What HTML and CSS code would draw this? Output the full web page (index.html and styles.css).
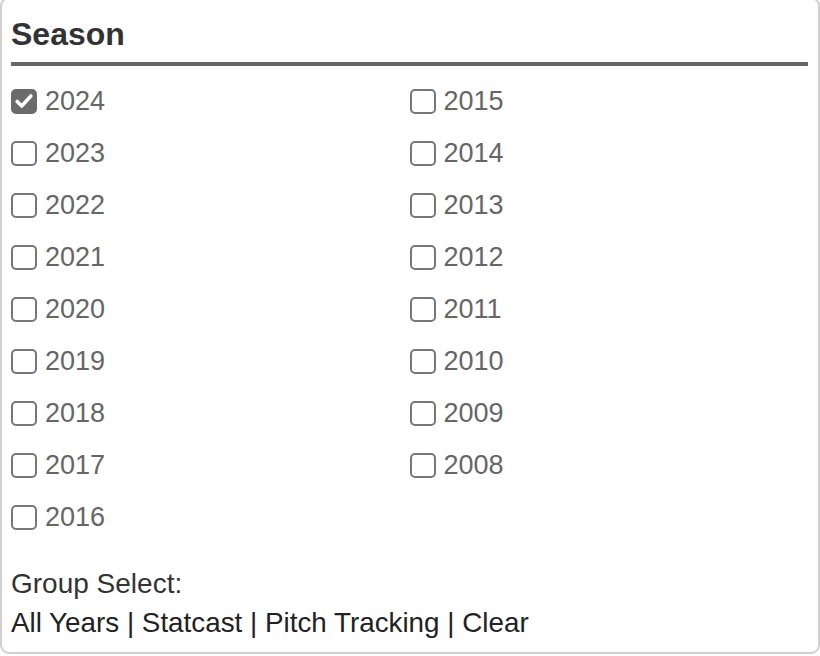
FILE: index.html
```html
<!DOCTYPE html>
<html>
<head>
<meta charset="utf-8">
<link rel="stylesheet" href="styles.css">
</head>
<body>
<div class="panel">
  <h2 class="title">Season</h2>
  <div class="years">
    <label class="opt"><span class="box checked"><svg viewBox="0 0 24 24" width="22" height="22"><path d="M4.5 12.5l5 5L19.5 6.5" fill="none" stroke="#fff" stroke-width="3.8" stroke-linecap="round" stroke-linejoin="round"/></svg></span><span class="yr">2024</span></label>
    <label class="opt"><span class="box"></span><span class="yr">2023</span></label>
    <label class="opt"><span class="box"></span><span class="yr">2022</span></label>
    <label class="opt"><span class="box"></span><span class="yr">2021</span></label>
    <label class="opt"><span class="box"></span><span class="yr">2020</span></label>
    <label class="opt"><span class="box"></span><span class="yr">2019</span></label>
    <label class="opt"><span class="box"></span><span class="yr">2018</span></label>
    <label class="opt"><span class="box"></span><span class="yr">2017</span></label>
    <label class="opt"><span class="box"></span><span class="yr">2016</span></label>
    <label class="opt"><span class="box"></span><span class="yr">2015</span></label>
    <label class="opt"><span class="box"></span><span class="yr">2014</span></label>
    <label class="opt"><span class="box"></span><span class="yr">2013</span></label>
    <label class="opt"><span class="box"></span><span class="yr">2012</span></label>
    <label class="opt"><span class="box"></span><span class="yr">2011</span></label>
    <label class="opt"><span class="box"></span><span class="yr">2010</span></label>
    <label class="opt"><span class="box"></span><span class="yr">2009</span></label>
    <label class="opt"><span class="box"></span><span class="yr">2008</span></label>
  </div>
  <div class="group-label">Group Select:</div>
  <div class="group-links"><a>All Years</a> | <a>Statcast</a> | <a>Pitch Tracking</a> | <a>Clear</a></div>
</div>
</body>
</html>
```
FILE: styles.css
```css
html, body {
  margin: 0;
  padding: 0;
  background: #fff;
  overflow: hidden;
}
body {
  font-family: "Liberation Sans", Arial, Helvetica, sans-serif;
}
.panel {
  box-sizing: border-box;
  width: 820px;
  height: 657px;
  margin-top: -3px;
  border: 2px solid #d0d0d0;
  border-radius: 9px;
  padding: 17px 10px 0 9px;
}
.title {
  margin: 0;
  font-size: 32px;
  line-height: 36px;
  font-weight: bold;
  color: #333;
  padding-bottom: 10px;
  border-bottom: 4px solid #666;
}
.years {
  display: grid;
  grid-template-columns: 1fr 1fr;
  grid-template-rows: repeat(9, 52px);
  grid-auto-flow: column;
  margin-top: 9px;
}
.opt {
  display: flex;
  align-items: center;
  gap: 8px;
}
.box {
  box-sizing: border-box;
  width: 26px;
  height: 25px;
  border: 2px solid #777;
  border-radius: 5px;
  display: flex;
  align-items: center;
  justify-content: center;
}
.box.checked {
  background: #6b6b6b;
  border-color: #6b6b6b;
}
.yr {
  font-size: 27px;
  line-height: 31px;
  color: #666;
}
.group-label {
  margin-top: 21px;
  font-size: 28px;
  line-height: 39px;
  color: #333;
}
.group-links {
  font-size: 27.8px;
  line-height: 39px;
  color: #222;
}
.group-links a {
  color: #222;
  text-decoration: none;
}
```
